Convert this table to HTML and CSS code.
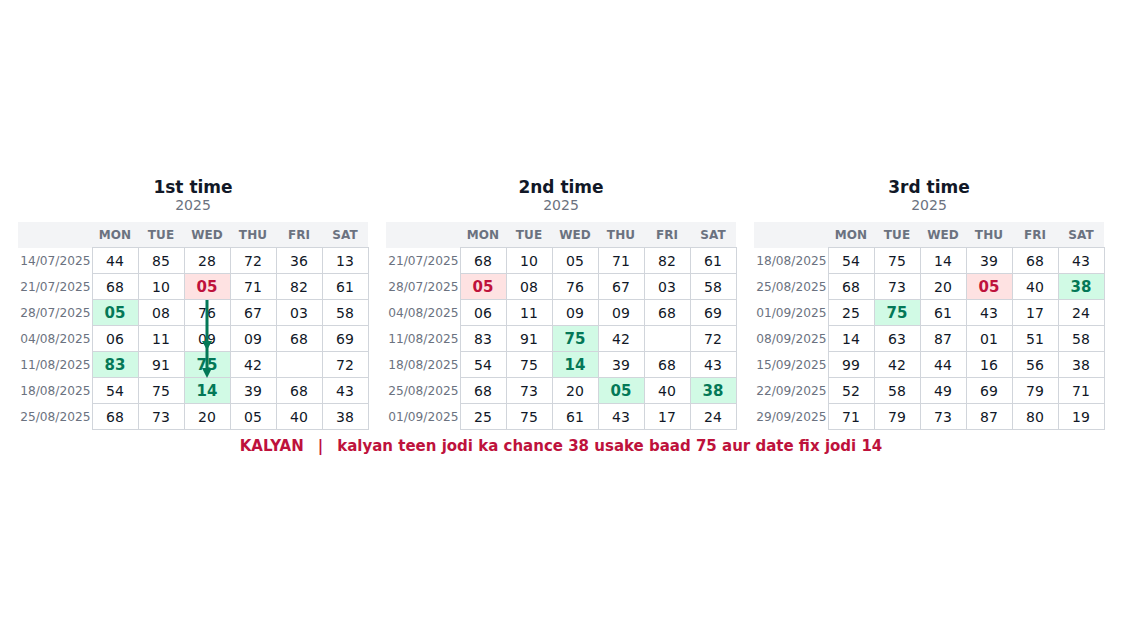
FILE: index.html
```html
<!DOCTYPE html>
<html>
<head>
<meta charset="utf-8">
<link rel="stylesheet" href="styles.css">
</head>
<body>
<main class="page">
  <div class="panels">
    <section class="panel">
      <div class="title">1st time</div>
      <div class="year">2025</div>
      <div class="table-wrap">
        <table class="chart">
          <thead><tr><th class="dh"></th><th>MON</th><th>TUE</th><th>WED</th><th>THU</th><th>FRI</th><th>SAT</th></tr></thead>
          <tbody>
            <tr><td class="date">14/07/2025</td><td>44</td><td>85</td><td>28</td><td>72</td><td>36</td><td>13</td></tr>
            <tr><td class="date">21/07/2025</td><td>68</td><td>10</td><td class="red">05</td><td>71</td><td>82</td><td>61</td></tr>
            <tr><td class="date">28/07/2025</td><td class="green">05</td><td>08</td><td>76</td><td>67</td><td>03</td><td>58</td></tr>
            <tr><td class="date">04/08/2025</td><td>06</td><td>11</td><td>09</td><td>09</td><td>68</td><td>69</td></tr>
            <tr><td class="date">11/08/2025</td><td class="green">83</td><td>91</td><td class="green">75</td><td>42</td><td></td><td>72</td></tr>
            <tr><td class="date">18/08/2025</td><td>54</td><td>75</td><td class="green">14</td><td>39</td><td>68</td><td>43</td></tr>
            <tr><td class="date">25/08/2025</td><td>68</td><td>73</td><td>20</td><td>05</td><td>40</td><td>38</td></tr>
          </tbody>
        </table>
        <svg class="arrows" width="350" height="208" viewBox="0 0 350 208">
          <line x1="189" y1="78" x2="189" y2="152" stroke="#047857" stroke-width="3"/>
          <polygon points="184,119 194,119 189,128" fill="#047857"/>
          <polygon points="184,146 194,146 189,156" fill="#047857"/>
        </svg>
      </div>
    </section>
    <section class="panel">
      <div class="title">2nd time</div>
      <div class="year">2025</div>
      <div class="table-wrap">
        <table class="chart">
          <thead><tr><th class="dh"></th><th>MON</th><th>TUE</th><th>WED</th><th>THU</th><th>FRI</th><th>SAT</th></tr></thead>
          <tbody>
            <tr><td class="date">21/07/2025</td><td>68</td><td>10</td><td>05</td><td>71</td><td>82</td><td>61</td></tr>
            <tr><td class="date">28/07/2025</td><td class="red">05</td><td>08</td><td>76</td><td>67</td><td>03</td><td>58</td></tr>
            <tr><td class="date">04/08/2025</td><td>06</td><td>11</td><td>09</td><td>09</td><td>68</td><td>69</td></tr>
            <tr><td class="date">11/08/2025</td><td>83</td><td>91</td><td class="green">75</td><td>42</td><td></td><td>72</td></tr>
            <tr><td class="date">18/08/2025</td><td>54</td><td>75</td><td class="green">14</td><td>39</td><td>68</td><td>43</td></tr>
            <tr><td class="date">25/08/2025</td><td>68</td><td>73</td><td>20</td><td class="green">05</td><td>40</td><td class="green">38</td></tr>
            <tr><td class="date">01/09/2025</td><td>25</td><td>75</td><td>61</td><td>43</td><td>17</td><td>24</td></tr>
          </tbody>
        </table>
      </div>
    </section>
    <section class="panel">
      <div class="title">3rd time</div>
      <div class="year">2025</div>
      <div class="table-wrap">
        <table class="chart">
          <thead><tr><th class="dh"></th><th>MON</th><th>TUE</th><th>WED</th><th>THU</th><th>FRI</th><th>SAT</th></tr></thead>
          <tbody>
            <tr><td class="date">18/08/2025</td><td>54</td><td>75</td><td>14</td><td>39</td><td>68</td><td>43</td></tr>
            <tr><td class="date">25/08/2025</td><td>68</td><td>73</td><td>20</td><td class="red">05</td><td>40</td><td class="green">38</td></tr>
            <tr><td class="date">01/09/2025</td><td>25</td><td class="green">75</td><td>61</td><td>43</td><td>17</td><td>24</td></tr>
            <tr><td class="date">08/09/2025</td><td>14</td><td>63</td><td>87</td><td>01</td><td>51</td><td>58</td></tr>
            <tr><td class="date">15/09/2025</td><td>99</td><td>42</td><td>44</td><td>16</td><td>56</td><td>38</td></tr>
            <tr><td class="date">22/09/2025</td><td>52</td><td>58</td><td>49</td><td>69</td><td>79</td><td>71</td></tr>
            <tr><td class="date">29/09/2025</td><td>71</td><td>79</td><td>73</td><td>87</td><td>80</td><td>19</td></tr>
          </tbody>
        </table>
      </div>
    </section>
  </div>
  <p class="caption"><span>KALYAN</span><span class="sep">|</span><span>kalyan teen jodi ka chance 38 usake baad 75 aur date fix jodi 14</span></p>
</main>
</body>
</html>
```

FILE: styles.css
```css
* { box-sizing: border-box; }
html, body { margin: 0; padding: 0; background: #ffffff; }
body {
  font-family: "DejaVu Sans", sans-serif;
  color: #111827;
}
.page {
  min-height: 632px;
  display: flex;
  flex-direction: column;
  align-items: center;
  justify-content: center;
}
.panels {
  display: flex;
  gap: 18px;
}
.panel {
  width: 350px;
  display: flex;
  flex-direction: column;
  align-items: center;
}
.title {
  font-size: 17px;
  font-weight: bold;
  line-height: 20px;
  color: #111827;
}
.year {
  font-size: 14px;
  line-height: 17px;
  color: #6b7280;
  margin-bottom: 8px;
}
.table-wrap {
  position: relative;
  width: 350px;
}
.chart {
  width: 350px;
  border-collapse: collapse;
  table-layout: fixed;
}
.chart th {
  background: #f3f4f6;
  color: #6b7280;
  font-size: 12px;
  font-weight: bold;
  letter-spacing: 0.1px;
  height: 26px;
  padding: 0;
  text-align: center;
  width: 46px;
}
.chart th.dh { width: 74px; }
.chart td {
  border: 1px solid #d1d5db;
  height: 26px;
  padding: 0;
  text-align: center;
  font-size: 14px;
  color: #111827;
}
.chart td.date {
  border: none;
  border-right: 1px solid #d1d5db;
  font-size: 12.2px;
  color: #6b7280;
  text-align: right;
  padding-right: 1px;
}
.chart td.green {
  background: #d1fae5;
  color: #047857;
  font-weight: bold;
  font-size: 15px;
}
.chart td.red {
  background: #fee2e2;
  color: #be123c;
  font-weight: bold;
  font-size: 15px;
}
.arrows {
  position: absolute;
  left: 0;
  top: 0;
  pointer-events: none;
}
.caption {
  margin: 8px 0 0;
  font-size: 15px;
  line-height: 17px;
  font-weight: bold;
  color: #be123c;
}
.caption .sep { margin: 0 14px; }
```
